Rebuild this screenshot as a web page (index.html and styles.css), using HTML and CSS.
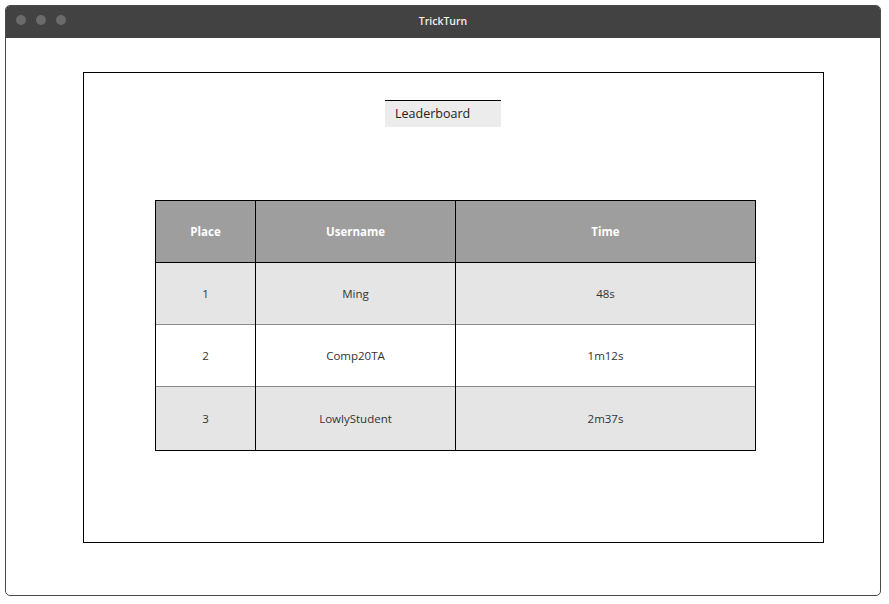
FILE: index.html
```html
<!DOCTYPE html>
<html>
<head>
<meta charset="utf-8">
<link rel="stylesheet" href="styles.css">
</head>
<body>
<div class="window">
  <div class="titlebar">
    <div class="dots"><span class="dot"></span><span class="dot"></span><span class="dot"></span></div>
    <div class="title">TrickTurn</div>
  </div>
  <div class="content">
    <div class="frame">
      <div class="heading">Leaderboard</div>
      <table class="board">
        <thead>
          <tr><th class="c1">Place</th><th class="c2">Username</th><th class="c3">Time</th></tr>
        </thead>
        <tbody>
          <tr class="alt"><td>1</td><td>Ming</td><td>48s</td></tr>
          <tr><td>2</td><td>Comp20TA</td><td>1m12s</td></tr>
          <tr class="alt"><td>3</td><td>LowlyStudent</td><td>2m37s</td></tr>
        </tbody>
      </table>
    </div>
  </div>
</div>
</body>
</html>
```
FILE: styles.css
```css
* { box-sizing: border-box; }
html, body { margin: 0; padding: 0; background: #fff; }
body {
  padding: 5px;
  font-family: "Open Sans", "Liberation Sans", sans-serif;
}
.window {
  width: 876px;
  height: 591px;
  border: 1px solid #4a4a4a;
  border-radius: 5px;
  overflow: hidden;
  display: flex;
  flex-direction: column;
}
.titlebar {
  height: 33px;
  margin: -1px -1px 0 -1px;
  background: #424242;
  position: relative;
  display: flex;
  align-items: center;
  justify-content: center;
}
.dots {
  position: absolute;
  left: 11px;
  top: 10px;
  display: flex;
  gap: 10px;
}
.dot {
  width: 10px;
  height: 10px;
  border-radius: 50%;
  background: #6b6b6b;
}
.title {
  color: #f0f0f0;
  font-size: 10.5px;
  font-weight: 600;
  margin-top: -2px;
}
.content {
  flex: 1;
  padding: 34px 0 0 77px;
}
.frame {
  width: 741px;
  height: 471px;
  border: 1px solid #000;
  padding-top: 27px;
}
.heading {
  margin-left: 301px;
  width: 116px;
  height: 27px;
  border-top: 1px solid #000;
  background: #ececec;
  font-size: 12.5px;
  font-weight: 500;
  color: #222;
  padding: 4px 0 0 10px;
  line-height: 18px;
}
.board {
  margin: 73px 0 0 71px;
  border-collapse: collapse;
  border: 1px solid #000;
  font-size: 11.5px;
  color: #333;
  table-layout: fixed;
}
.board th, .board td {
  border-left: 1px solid #000;
  border-right: 1px solid #000;
  text-align: center;
  padding: 0;
}
.board th {
  background: #9e9e9e;
  color: #fff;
  font-weight: 700;
  height: 62px;
  border-bottom: 1px solid #000;
  font-size: 11.5px;
}
.board td {
  height: 62px;
  border-top: 1px solid #8a8a8a;
}
.board tbody tr:first-child td { border-top: 1px solid #000; }
.board tbody tr:last-child td { height: 64px; }
.c1 { width: 100px; }
.c2 { width: 200px; }
.c3 { width: 300px; }
.alt td { background: #e5e5e5; }
```
